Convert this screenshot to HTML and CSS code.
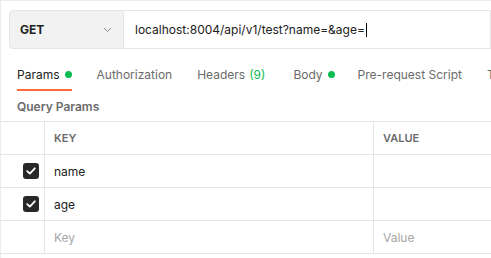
FILE: index.html
```html
<!DOCTYPE html>
<html lang="en">
<head>
    <meta charset="UTF-8">
    <meta name="viewport" content="width=device-width, initial-scale=1.0">
    <title>Request</title>
    <link rel="stylesheet" href="styles.css">
</head>
<body>
    <div class="app">
        <div class="request-bar">
            <div class="method">
                <span class="method-name">GET</span>
                <svg class="chevron" width="9" height="6" viewBox="0 0 9 6">
                    <path d="M1 1 L4.5 4.5 L8 1" fill="none" stroke="#8a8a8a" stroke-width="1"/>
                </svg>
            </div>
            <div class="url">
                <span class="url-text">localhost:8004/api/v1/test?name=&amp;age=</span><span class="caret"></span>
            </div>
        </div>

        <div class="tabs">
            <div class="tab active">Params <span class="dot"></span></div>
            <div class="tab">Authorization</div>
            <div class="tab wide">Headers <span class="count">(9)</span></div>
            <div class="tab narrow">Body <span class="dot"></span></div>
            <div class="tab">Pre-request Script</div>
            <div class="tab">Tests</div>
        </div>

        <div class="section-title">Query Params</div>

        <div class="table">
            <div class="row head">
                <div class="cell check"></div>
                <div class="cell key">KEY</div>
                <div class="cell value">VALUE</div>
            </div>
            <div class="row">
                <div class="cell check"><span class="box"><svg width="10" height="8" viewBox="0 0 10 8"><path d="M1.2 4.2 L3.8 6.6 L8.8 1.3" fill="none" stroke="#fff" stroke-width="1.8" stroke-linecap="round" stroke-linejoin="round"/></svg></span></div>
                <div class="cell key">name</div>
                <div class="cell value"></div>
            </div>
            <div class="row">
                <div class="cell check"><span class="box"><svg width="10" height="8" viewBox="0 0 10 8"><path d="M1.2 4.2 L3.8 6.6 L8.8 1.3" fill="none" stroke="#fff" stroke-width="1.8" stroke-linecap="round" stroke-linejoin="round"/></svg></span></div>
                <div class="cell key">age</div>
                <div class="cell value"></div>
            </div>
            <div class="row">
                <div class="cell check"></div>
                <div class="cell key placeholder">Key</div>
                <div class="cell value placeholder">Value</div>
            </div>
        </div>
    </div>
</body>
</html>
```

FILE: styles.css
```css
* {
    margin: 0;
    padding: 0;
    box-sizing: border-box;
}
html, body {
    height: 100%;
    width: 100%;
    background: #fff;
    font-family: Inter, "Noto Sans", sans-serif;
    color: #212121;
    overflow: hidden;
}
.app {
    width: 100%;
    height: 100%;
    border-top: 1px solid #ececec;
    border-left: 1px solid #ececec;
    overflow: hidden;
}
.request-bar {
    display: flex;
    padding: 9px 0 0 8px;
    height: 49px;
}
.method {
    width: 115px;
    height: 39px;
    flex-shrink: 0;
    display: flex;
    align-items: center;
    justify-content: space-between;
    padding: 0 11px 0 10px;
    background: #f2f2f2;
    border: 1px solid #e6e6e6;
    border-radius: 4px 0 0 4px;
}
.method-name {
    font-size: 12px;
    font-weight: 700;
    color: #212121;
}
.chevron {
    margin-top: 1px;
}
.url {
    flex: 1;
    height: 39px;
    display: flex;
    align-items: center;
    padding-left: 11px;
    border: 1px solid #e6e6e6;
    border-left: none;
    white-space: nowrap;
    overflow: hidden;
}
.url-text {
    font-size: 12px;
    color: #212121;
}
.caret {
    display: inline-block;
    width: 1px;
    height: 14px;
    background: #000;
    margin-left: 1px;
}
.tabs {
    display: flex;
    padding-left: 16px;
    margin-top: 9px;
    height: 32px;
    white-space: nowrap;
    overflow: hidden;
}
.tab {
    display: flex;
    align-items: center;
    height: 100%;
    margin-right: 25px;
    font-size: 12px;
    color: #6b6b6b;
    border-bottom: 2px solid transparent;
    flex-shrink: 0;
}
.tab.wide {
    margin-right: 28px;
}
.tab.narrow {
    margin-right: 23px;
}
.tab.active {
    color: #212121;
    border-bottom-color: #ff6c37;
}
.dot {
    display: inline-block;
    width: 7px;
    height: 7px;
    border-radius: 50%;
    background: #0cbb52;
    margin-left: 5px;
}
.count {
    color: #0cbb52;
    margin-left: 4px;
}
.section-title {
    padding: 8px 0 0 16px;
    height: 30px;
    font-size: 12px;
    font-weight: 600;
    color: #6b6b6b;
}
.table {
    border-top: 1px solid #e6e6e6;
}
.row {
    display: flex;
    height: 33px;
    border-bottom: 1px solid #e6e6e6;
}
.cell {
    display: flex;
    align-items: center;
    font-size: 12px;
    color: #212121;
}
.cell.check {
    width: 44px;
    justify-content: flex-end;
    padding-right: 5px;
    border-right: 1px solid #e6e6e6;
}
.cell.key {
    width: 329px;
    padding-left: 9px;
    border-right: 1px solid #e6e6e6;
}
.cell.value {
    flex: 1;
    padding-left: 9px;
}
.head .cell {
    font-size: 11px;
    font-weight: 600;
    color: #6b6b6b;
}
.placeholder.cell {
    color: #a6a6a6;
}
.box {
    width: 16px;
    height: 16px;
    border-radius: 3px;
    background: #282828;
    display: flex;
    align-items: center;
    justify-content: center;
}
```
